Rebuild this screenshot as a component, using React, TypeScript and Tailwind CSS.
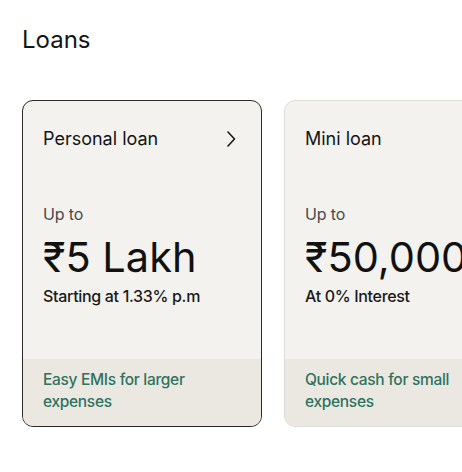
function Chevron() {
  return (
    <svg width="10" height="16" viewBox="0 0 10 16" fill="none" className="text-[#1a1a1a]">
      <polyline points="2,1 8.5,8 2,15" stroke="currentColor" strokeWidth="1.6" strokeLinecap="round" strokeLinejoin="round" />
    </svg>
  );
}

type LoanProps = {
  title: string;
  amount: string;
  rate: string;
  note: string;
  active?: boolean;
};

function LoanCard({ title, amount, rate, note, active }: LoanProps) {
  return (
    <div
      className={
        "flex w-[240px] shrink-0 flex-col overflow-hidden rounded-[11px] bg-[#f3f2ee] " +
        (active ? "border-[1.5px] border-[#2a2a2a]" : "border-[1.5px] border-[#dedcd6]")
      }
    >
      <div className="flex h-[258px] flex-col pl-[20px] pr-[25px] pt-[26px]">
        <div className="flex items-center justify-between">
          <span className="text-[18px] leading-[24px] text-[#141414]">{title}</span>
          {active && <Chevron />}
        </div>
        <span className="mt-[52px] text-[16px] leading-[22px] tracking-[-0.01em] text-[#4a4a4a]">Up to</span>
        <span className="mt-[8px] whitespace-nowrap text-[41.5px] leading-[48px] text-[#111]">{amount}</span>
        <span className="mt-[4px] text-[16px] font-medium leading-[22px] tracking-[-0.02em] text-[#1a1a1a]">{rate}</span>
      </div>
      <div className="flex-1 bg-[#ebe8e1] pb-[13px] pl-[20px] pr-[16px] pt-[10px]">
        <p className="text-[15.5px] font-medium leading-[22px] tracking-[-0.02em] text-[#2f725f]">{note}</p>
      </div>
    </div>
  );
}

export default function App() {
  return (
    <div
      className="h-[472px] w-[462px] overflow-hidden bg-white"
      style={{ fontFamily: "Inter, 'Noto Sans', sans-serif" }}
    >
      <h2 className="px-[22px] pt-[24px] text-[24px] leading-[32px] text-[#141414]">Loans</h2>
      <div className="mt-[44px] flex gap-[22px] px-[22px]">
        <LoanCard
          title="Personal loan"
          amount="₹5 Lakh"
          rate="Starting at 1.33% p.m"
          note="Easy EMIs for larger expenses"
          active
        />
        <LoanCard
          title="Mini loan"
          amount="₹50,000"
          rate="At 0% Interest"
          note="Quick cash for small expenses"
        />
      </div>
    </div>
  );
}
